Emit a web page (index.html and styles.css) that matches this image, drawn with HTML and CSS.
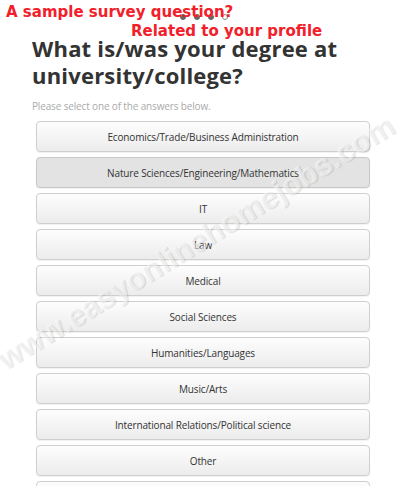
FILE: index.html
```html
<!DOCTYPE html>
<html>
<head>
<meta charset="utf-8">
<link rel="stylesheet" href="styles.css">
</head>
<body>
<div class="page">
  <div class="progress">
    <span class="dot done"></span>
    <span class="dot done"></span>
    <span class="dot done"></span>
    <span class="dot"></span>
  </div>
  <h1 class="question">What is/was your degree at university/college?</h1>
  <p class="hint">Please select one of the answers below.</p>
  <div class="answers">
    <button class="answer">Economics/Trade/Business Administration</button>
    <button class="answer active">Nature Sciences/Engineering/Mathematics</button>
    <button class="answer">IT</button>
    <button class="answer">Law</button>
    <button class="answer">Medical</button>
    <button class="answer">Social Sciences</button>
    <button class="answer">Humanities/Languages</button>
    <button class="answer">Music/Arts</button>
    <button class="answer">International Relations/Political science</button>
    <button class="answer">Other</button>
    <button class="answer"></button>
  </div>
</div>
<div class="note note-1">A sample survey question?</div>
<div class="note note-2">Related to your profile</div>
<div class="watermark">www.easyonlinehomejobs.com</div>
</body>
</html>
```
FILE: styles.css
```css
html, body {
  margin: 0;
  padding: 0;
  background: #fff;
  overflow: hidden;
}
body {
  width: 400px;
  height: 486px;
  position: relative;
  font-family: "Open Sans", "DejaVu Sans", sans-serif;
}
.page {
  padding: 14px 0 0 32px;
}
.progress {
  display: flex;
  gap: 8px;
  margin-left: 148px;
  height: 6px;
}
.dot {
  width: 6px;
  height: 6px;
  border-radius: 50%;
  border: 1px solid #888;
  box-sizing: border-box;
}
.dot.done {
  background: #666;
  border-color: #666;
}
.question {
  margin: 15px 0 0 0;
  font-size: 22px;
  line-height: 27px;
  font-weight: 700;
  color: #333;
  letter-spacing: 0.2px;
  width: 340px;
}
.hint {
  margin: 10px 0 0 0;
  font-size: 10px;
  line-height: 14px;
  letter-spacing: -0.15px;
  color: #aaa;
}
.answers {
  margin: 8px 0 0 4px;
  width: 334px;
  display: flex;
  flex-direction: column;
  gap: 5px;
}
.answer {
  height: 31px;
  border: 1px solid #cfcfcf;
  border-radius: 4px;
  background: linear-gradient(#fdfdfd, #ececec);
  font-family: "Open Sans", "DejaVu Sans", sans-serif;
  font-size: 10px;
  letter-spacing: -0.15px;
  color: #333;
  padding: 0;
  box-shadow: 0 1px 1px rgba(0,0,0,0.06);
  flex-shrink: 0;
}
.answer.active {
  background: #e3e3e3;
  border-color: #c8c8c8;
}
.note {
  position: absolute;
  color: #f2202a;
  font-family: "DejaVu Sans", sans-serif;
  font-weight: 700;
  font-size: 15px;
  line-height: 20px;
  white-space: nowrap;
}
.note-1 {
  left: 6px;
  top: 2px;
}
.note-2 {
  left: 131px;
  top: 21px;
}
.watermark {
  position: absolute;
  left: 8px;
  top: 345px;
  line-height: 30px;
  transform: rotate(-31.4deg);
  transform-origin: 0 100%;
  font-family: "Liberation Sans", sans-serif;
  font-weight: 700;
  font-size: 31px;
  color: rgba(255,255,255,0.55);
  text-shadow: 1px 1px 1px rgba(0,0,0,0.12);
  white-space: nowrap;
  pointer-events: none;
}
```
